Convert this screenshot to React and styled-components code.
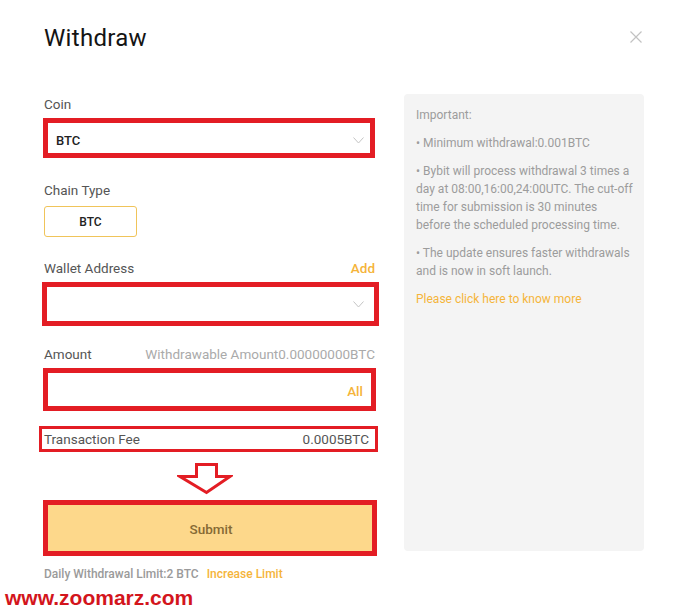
import styled, { createGlobalStyle } from 'styled-components';

const GlobalStyle = createGlobalStyle`
  body { margin: 0; background: #fff; font-family: Roboto, 'Noto Sans', sans-serif; }
`;

const RED = '#e31d24';
const YELLOW = '#f5b43a';

const Page = styled.div` width: 689px; height: 609px; overflow: hidden; background: #fff; `;
const Modal = styled.div` padding: 24px 47px 0 44px; `;
const Header = styled.div` display: flex; justify-content: space-between; align-items: center; height: 28px; `;
const Title = styled.h1` margin: 0; font-size: 24px; font-weight: 400; color: #141414; letter-spacing: 0.3px; `;
const Close = styled.svg` width: 12px; height: 12px; margin-top: -2px; `;

const Body = styled.div` display: flex; gap: 29px; margin-top: 42px; `;
const Left = styled.div` width: 331px; flex-shrink: 0; display: flex; flex-direction: column; padding-top: 1px; `;

const LabelRow = styled.div` display: flex; justify-content: space-between; align-items: center; height: 18px; margin-top: ${p => p.$mt || 0}px; font-size: 13.5px; color: #555; `;
const Hint = styled.span` color: ${p => p.$accent ? YELLOW : '#aaa'}; font-weight: ${p => p.$accent ? 500 : 400}; `;

const Highlight = styled.div`
  box-sizing: border-box; display: flex; align-items: center; justify-content: space-between;
  margin-top: ${p => p.$mt}px; margin-left: ${p => p.$ml}px; width: ${p => p.$w}px; height: ${p => p.$h}px;
  border: ${p => p.$bw || 5}px solid ${RED};
  padding: ${p => p.$pt || 0}px ${p => p.$pr || 6}px 0 ${p => p.$pl || 8}px;
  background: ${p => p.$fill || '#fff'};
`;
const Value = styled.span` font-size: 13px; font-weight: 500; color: #222; `;
const Chevron = styled.svg` width: 11px; height: 7px; `;
const AllLink = styled.span` font-size: 13.5px; font-weight: 500; color: ${YELLOW}; `;

const ChainButton = styled.button`
  box-sizing: border-box; margin-top: 7px; width: 93px; height: 31px; border: 1px solid #f0c45a; border-radius: 3px;
  background: #fff; font-family: inherit; font-size: 12px; font-weight: 500; color: #222; padding: 0;
`;

const FeeText = styled.span` font-size: 13.5px; color: #555; `;

const ArrowWrap = styled.div` margin: 11px 0 0 133px; height: 30px; svg { display: block; } `;

const SubmitLabel = styled.span` width: 100%; text-align: center; font-size: 13.5px; font-weight: 500; color: #866a34; `;

const LimitLine = styled.div` margin-top: 10px; font-size: 12px; font-weight: 500; color: #9a9a9a; line-height: 16px; `;
const LimitLink = styled.span` color: ${YELLOW}; margin-left: 8px; `;

const Panel = styled.div`
  box-sizing: border-box; width: 240px; height: 457px; flex-shrink: 0; background: #f4f4f4; border-radius: 4px;
  padding: 12px 6px 0 12px; font-size: 12px; line-height: 18px; color: #9c9c9c;
`;
const Note = styled.p` margin: 0 0 10px; white-space: nowrap; `;
const MoreLink = styled.p` margin: 0; color: ${YELLOW}; `;

const Watermark = styled.div` margin: 5px 0 0 5px; font-family: 'Liberation Sans', Arial, sans-serif; font-weight: 700; font-size: 21px; line-height: 22px; color: #d3151c; `;

const ChevronIcon = () => (
  <Chevron viewBox="0 0 11 7"><polyline points="0.5,0.5 5.5,6 10.5,0.5" fill="none" stroke="#c4c4c4" strokeWidth="1" /></Chevron>
);

export default function App() {
  return (
    <Page>
      <GlobalStyle />
      <Modal>
        <Header>
          <Title>Withdraw</Title>
          <Close viewBox="0 0 12 12"><path d="M0.5 0.5L11.5 11.5M11.5 0.5L0.5 11.5" stroke="#c2c2c2" strokeWidth="1.2" /></Close>
        </Header>
        <Body>
          <Left>
            <LabelRow>Coin</LabelRow>
            <Highlight $mt={5} $ml={-1} $w={332} $h={40} $pt={5}>
              <Value>BTC</Value>
              <ChevronIcon />
            </Highlight>

            <LabelRow $mt={23}>Chain Type</LabelRow>
            <ChainButton>BTC</ChainButton>

            <LabelRow $mt={22}>Wallet Address<Hint $accent>Add</Hint></LabelRow>
            <Highlight $mt={5} $ml={-2} $w={337} $h={44} $pr={10}>
              <span />
              <ChevronIcon />
            </Highlight>

            <LabelRow $mt={19}>Amount<Hint>Withdrawable Amount0.00000000BTC</Hint></LabelRow>
            <Highlight $mt={5} $ml={-1} $w={333} $h={43} $pr={8} $pt={3}>
              <span />
              <AllLink>All</AllLink>
            </Highlight>

            <Highlight $mt={15} $ml={-5} $w={339} $h={26} $bw={3} $pl={2} $pr={0}>
              <FeeText>Transaction Fee</FeeText>
              <FeeText>0.0005BTC</FeeText>
            </Highlight>

            <ArrowWrap>
              <svg width="56" height="32" viewBox="0 0 56 32">
                <path d="M19.5 1.5H39.5V13.5H53L29.5 29.5L3 13.5H19.5Z" fill="#fff" stroke={RED} strokeWidth="3" strokeLinejoin="miter" />
              </svg>
            </ArrowWrap>

            <Highlight $mt={7} $ml={-1} $w={334} $h={56} $fill="#fdd88b" $pt={2}>
              <SubmitLabel>Submit</SubmitLabel>
            </Highlight>

            <LimitLine>Daily Withdrawal Limit:2 BTC<LimitLink>Increase Limit</LimitLink></LimitLine>
          </Left>

          <Panel>
            <Note>Important:</Note>
            <Note>• Minimum withdrawal:0.001BTC</Note>
            <Note>• Bybit will process withdrawal 3 times a<br />day at 08:00,16:00,24:00UTC. The cut-off<br />time for submission is 30 minutes<br />before the scheduled processing time.</Note>
            <Note>• The update ensures faster withdrawals<br />and is now in soft launch.</Note>
            <MoreLink>Please click here to know more</MoreLink>
          </Panel>
        </Body>
      </Modal>
      <Watermark>www.zoomarz.com</Watermark>
    </Page>
  );
}
